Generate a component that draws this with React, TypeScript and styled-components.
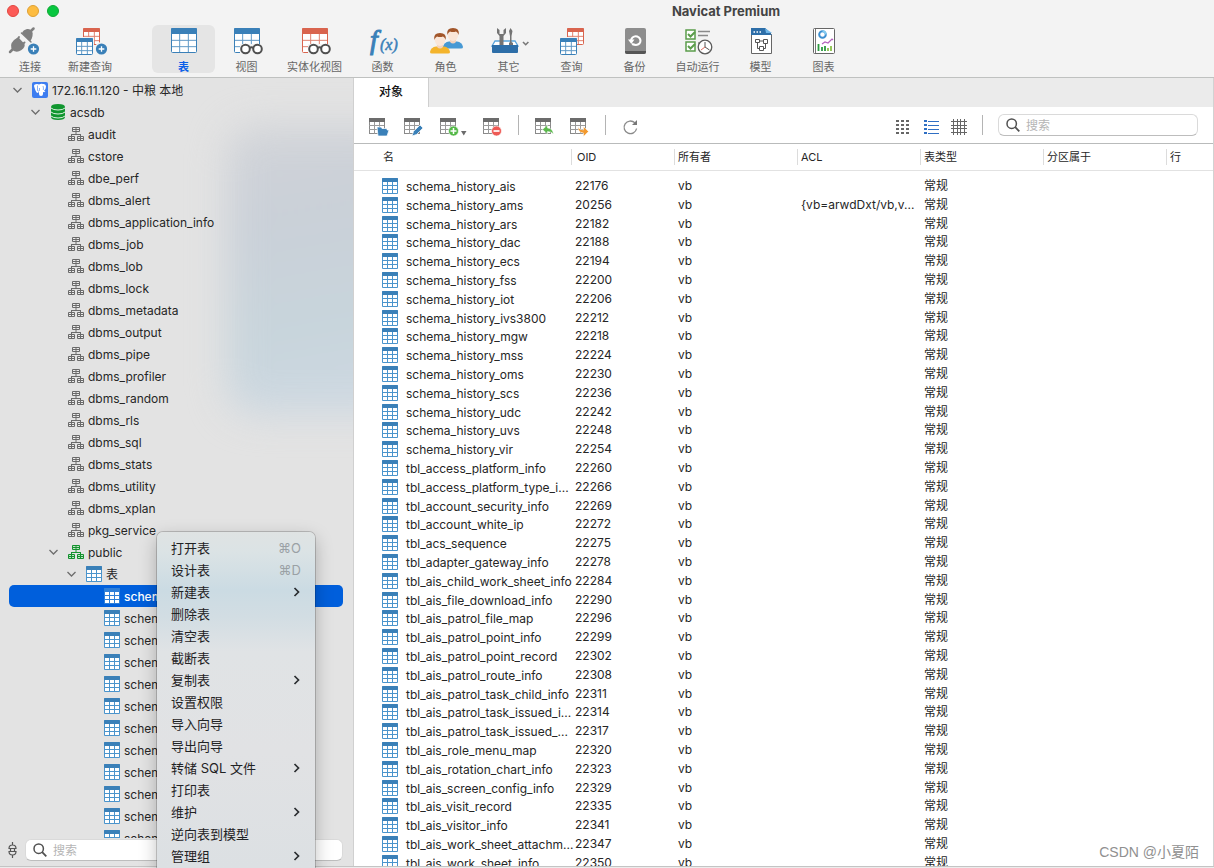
import React from "react";
import styled, { createGlobalStyle, css } from "styled-components";

const GlobalStyle = createGlobalStyle`
  *, *::before, *::after { box-sizing: border-box; }
  html, body { margin: 0; padding: 0; overflow: hidden; }
  body, button, input, table {
    font-family: Inter, "Noto Sans CJK SC", sans-serif;
    font-size: 12px;
    color: #262626;
  }
  button { border: 0; padding: 0; background: none; }
  svg { flex: none; }
`;

/* ---------- window frame ---------- */

const Shell = styled.div`
  position: relative;
  display: flex;
  flex-direction: column;
  height: 100vh;
  overflow: hidden;
  background: #fff;
`;

const WindowHeader = styled.header`
  flex: none;
  background: #f3f3f3;
  border-bottom: 1px solid #bfc1c0;
`;

const TitleBar = styled.div`
  display: flex;
  align-items: center;
  height: 22px;
`;

const Lights = styled.div`
  display: flex;
  gap: 8px;
  width: 238px;
  padding-left: 7px;
`;

const Light = styled.button<{ $color: string; $edge: string }>`
  width: 12px;
  height: 12px;
  border-radius: 50%;
  background: ${(p) => p.$color};
  border: 1px solid ${(p) => p.$edge};
`;

const Title = styled.h1`
  flex: 1;
  margin: 0;
  text-align: center;
  font-size: 13px;
  font-weight: 700;
  line-height: 20px;
  color: #444;
`;

const ToolStrip = styled.nav`
  display: flex;
  height: 55px;
  padding-top: 3px;
`;

const ToolGroup = styled.div`
  display: flex;
  margin-right: 32px;
`;

const Tool = styled.button<{ $width: number; $active?: boolean }>`
  display: flex;
  flex-direction: column;
  align-items: center;
  gap: 5px;
  width: ${(p) => p.$width}px;
  height: 48px;
  padding-top: 2px;
  border-radius: 6px;
  font-size: 11px;
  line-height: 14px;
  white-space: nowrap;
  color: #666;
  ${(p) =>
    p.$active &&
    css`
      background: #e5e5e5;
      color: #0a60e8;
      font-weight: 700;
    `}
`;

const Body = styled.div`
  display: flex;
  flex: 1;
  min-height: 0;
`;

const StatusEdge = styled.footer`
  flex: none;
  height: 2px;
  background: #ececec;
  border-top: 1px solid #c4c4c4;
`;

/* ---------- sidebar ---------- */

const Sidebar = styled.aside`
  position: relative;
  z-index: 0;
  display: flex;
  flex: none;
  flex-direction: column;
  width: 354px;
  overflow: hidden;
  background: #e3e3e3;
  border-right: 1px solid #d0d0d0;
  &::before {
    content: "";
    position: absolute;
    z-index: -1;
    top: 48px;
    right: -60px;
    width: 186px;
    height: 288px;
    border-radius: 30px;
    background: linear-gradient(170deg, #d2d4d8, #cad0d8 30%, #c8d5dc 70%, #cfd9e3);
    filter: blur(18px);
  }
`;

const Tree = styled.ul`
  flex: 1;
  min-height: 0;
  margin: 0;
  padding: 1px 10px 0 9px;
  overflow: hidden;
  list-style: none;
`;

const TreeRow = styled.li<{ $level: number; $selected?: boolean }>`
  display: flex;
  align-items: center;
  height: 22px;
  padding-left: ${(p) => p.$level * 18}px;
  border-radius: 5px;
  line-height: 17px;
  white-space: nowrap;
  color: #262626;
  ${(p) =>
    p.$selected &&
    css`
      background: #005fdc;
      color: #fff;
      font-weight: 500;
    `}
`;

const Twisty = styled.span`
  display: flex;
  justify-content: center;
  width: 16px;
  margin-right: 7px;
`;

const TreeIcon = styled.span`
  display: flex;
  width: 16px;
  margin-right: 4px;
`;

const SideFooter = styled.div`
  display: flex;
  align-items: center;
  gap: 7px;
  height: 28px;
  padding: 0 10px 4px 7px;
`;

const SearchBox = styled.label<{ $wide?: boolean }>`
  display: flex;
  align-items: center;
  gap: 6px;
  height: 22px;
  padding: 0 7px;
  background: #fff;
  border: 1px solid #dadada;
  border-bottom-color: #bdbdbd;
  border-radius: 6px;
  ${(p) => (p.$wide ? "flex: 1;" : "width: 200px;")}
  input {
    flex: 1;
    min-width: 0;
    padding: 0;
    border: 0;
    outline: 0;
    background: none;
  }
  input::placeholder { color: #b5b5b5; }
`;

/* ---------- object panel ---------- */

const Panel = styled.main`
  display: flex;
  flex: 1;
  flex-direction: column;
  min-width: 0;
  overflow: hidden;
  border-right: 1px solid #d2d2d2;
`;

const TabBar = styled.div`
  display: flex;
  flex: none;
  height: 29px;
  background: #ebebeb;
`;

const Tab = styled.button`
  width: 75px;
  padding-bottom: 4px;
  background: #fff;
  border-right: 1px solid #cfcfcf;
  font-weight: 500;
  color: #111;
`;

const ObjectBar = styled.div`
  display: flex;
  flex: none;
  align-items: center;
  height: 37px;
  padding: 0 15px 0 14px;
  border-bottom: 1px solid #b9bbbb;
`;

const IconButton = styled.button<{ $width?: number }>`
  display: flex;
  align-items: center;
  width: ${(p) => p.$width ?? 36}px;
  height: 24px;
  padding-top: 3px;
`;

const Divider = styled.span<{ $after: number }>`
  width: 1px;
  height: 20px;
  margin-right: ${(p) => p.$after}px;
  background: #b4b4b4;
`;

const Spacer = styled.span`
  flex: 1;
`;

const TableArea = styled.div`
  flex: 1;
  min-height: 0;
  overflow: hidden;
`;

const Grid = styled.table`
  width: 100%;
  table-layout: fixed;
  border-collapse: separate;
  border-spacing: 0;
  white-space: nowrap;
  th {
    height: 27px;
    padding: 0;
    border-bottom: 1px solid #e2e2e2;
    font-size: 11px;
    font-weight: 400;
    line-height: 16px;
    text-align: left;
  }
  td {
    height: 19px;
    padding: 0 0 0 3px;
    line-height: 17px;
    vertical-align: top;
  }
`;

/* Rows run four of 19px to one of 18px. */
const GridRow = styled.tr`
  &:nth-child(5n + 3) td { height: 18px; }
`;

const SpacerRow = styled.tr`
  td { height: 6px; line-height: 0; }
`;

const HeadLabel = styled.span<{ $indent: number; $last?: boolean }>`
  display: block;
  height: 16px;
  padding-left: ${(p) => p.$indent}px;
  border-right: ${(p) => (p.$last ? "0" : "1px solid #dcdcdc")};
`;

const NameCell = styled.div`
  display: flex;
  align-items: center;
  gap: 8px;
  height: 18px;
  padding-left: 25px;
`;

/* ---------- overlays ---------- */

const Menu = styled.div`
  position: absolute;
  z-index: 5;
  top: 532px;
  left: 157px;
  width: 158px;
  padding: 5px 0;
  border-radius: 6px 6px 0 0;
  background: linear-gradient(
    to bottom,
    #dfe3e3 0,
    #dbe3e5 20px,
    #cbdbe3 58px,
    #d2dde3 85px,
    #e0e3e5 120px,
    #e1e2e4 220px,
    #dce0e3 335px
  );
  box-shadow: 0 0 0 1px rgba(0, 0, 0, 0.18), 0 6px 18px rgba(0, 0, 0, 0.26);
`;

const MenuItem = styled.button`
  display: flex;
  align-items: center;
  justify-content: space-between;
  width: 100%;
  height: 22px;
  padding: 0 14px;
  font-size: 13px;
  line-height: 22px;
  text-align: left;
  color: #1f2224;
`;

const Shortcut = styled.kbd`
  font-family: Inter, "DejaVu Sans", sans-serif;
  font-size: 13px;
  color: #9aa1a5;
`;

const Watermark = styled.div`
  position: absolute;
  right: 15px;
  bottom: 5px;
  font-family: "Liberation Sans", "Noto Sans CJK SC", sans-serif;
  font-size: 14px;
  line-height: 22px;
  color: #909090;
`;

/* ---------- icons ---------- */

const BLUE = "#3a80b8";
const RED = "#d9644e";

const MiniTable = ({ x, y, w, h, c }: { x: number; y: number; w: number; h: number; c: string }) => {
  const head = Math.round(h * 0.25);
  const rh = (h - head) / 3;
  return (
    <g>
      <rect x={x + 0.5} y={y + 0.5} width={w - 1} height={h - 1} rx="1" fill="#fff" stroke={c} />
      <rect x={x} y={y} width={w} height={head} rx="1" fill={c} />
      <path
        d={`M${x + w / 3} ${y + head}v${h - head} M${x + (2 * w) / 3} ${y + head}v${h - head} M${x} ${y + head + rh}h${w} M${x} ${y + head + 2 * rh}h${w}`}
        stroke={c}
        strokeWidth="1"
        opacity="0.8"
      />
    </g>
  );
};

const PlusBadge = ({ x, y }: { x: number; y: number }) => (
  <g>
    <circle cx={x} cy={y} r="5.6" fill={BLUE} />
    <path d={`M${x - 2.8} ${y}h5.6M${x} ${y - 2.8}v5.6`} stroke="#fff" strokeWidth="1.3" />
  </g>
);

const Glasses = () => (
  <g fill="#fff" stroke="#505050" strokeWidth="2">
    <path d="M13 17h25v11H13z" fill="#f3f3f3" stroke="none" />
    <circle cx="18.500" cy="22" r="4.300" />
    <circle cx="30.500" cy="22" r="4.300" />
    <path d="M22.500 21q2-1.600 4 0" fill="none" />
  </g>
);

const Person = ({ x, y, c }: { x: number; y: number; c: string }) => (
  <g>
    <path d={`M${x - 10} ${y + 20}q1-5 6-5.500h8q5 .5 6 5.500q0 1.500-2 1.500h-16q-2 0-2-1.500z`} fill={c} />
    <path d={`M${x - 3} ${y + 11}h6v4q-3 3-6 0z`} fill="#f3d3bd" />
    <ellipse cx={x} cy={y + 8} rx="5.200" ry="6" fill="#fae6d8" />
    <path d={`M${x - 5.6} ${y + 8}q-1.400-7 5.600-7t5.600 7q-.8-3-2.600-3.500q-3 1-6 0q-2 1-2.600 3.500z`} fill="#a2562a" />
  </g>
);

const toolIcons: Record<string, React.ReactNode> = {
  connect: (
    <>
      <g fill="#7f7f7f" stroke="#7f7f7f" strokeLinecap="round">
        <path d="M0 25l3.500-3.500" strokeWidth="2.500" fill="none" />
        <path d="M4 13q4-3 5-2l5.500 6q1 3-3 6-5 3.500-9 0-3.500-5 1.500-10z" stroke="none" />
        <path d="M6.500 13.500L9 10M11.500 18l3-2.500" strokeWidth="2" fill="none" />
        <path d="M11.500 6l9.500 9" strokeWidth="1.500" />
        <path d="M12 6q1-3 5-4 3-.5 4.500 1.500Q23.500 6 22.500 9q-.5 3-2.500 5.500z" stroke="none" />
        <path d="M21 4l2.500-2.500" strokeWidth="2.500" fill="none" />
      </g>
      <circle cx="23.500" cy="22" r="6.500" fill="#f3f3f3" />
      <PlusBadge x={23.5} y={22} />
    </>
  ),
  newQuery: (
    <>
      <MiniTable x={13} y={1} w={17} h={17} c={RED} />
      <path d="M5 10h19v18H5z" fill="#f3f3f3" />
      <MiniTable x={6} y={11} w={17} h={17} c={BLUE} />
      <circle cx="31.500" cy="22" r="7" fill="#f3f3f3" />
      <PlusBadge x={31.5} y={22} />
    </>
  ),
  table: <MiniTable x={7} y={1} w={26} h={25} c={BLUE} />,
  view: (
    <>
      <MiniTable x={7} y={1} w={26} h={25} c={BLUE} />
      <Glasses />
    </>
  ),
  matView: (
    <>
      <MiniTable x={7} y={1} w={26} h={25} c={RED} />
      <Glasses />
    </>
  ),
  func: (
    <g fill={BLUE} stroke={BLUE} fontFamily="Liberation Serif" fontStyle="italic">
      <text x="7" y="22" fontSize="28" strokeWidth="1">f</text>
      <text x="17" y="23" fontSize="16" strokeWidth="0.5">(x)</text>
    </g>
  ),
  role: (
    <>
      <Person x={27} y={0} c="#4799d4" />
      <Person x={14} y={5} c="#f4b42c" />
    </>
  ),
  other: (
    <>
      <path d="M6 14h20l3 5H3z" fill="#fff" stroke="#5aa5dc" strokeWidth="1.300" />
      <path d="M8 1v5l2.500 3v10h4V9L17 6V1l-2.500 2v4h-4V3z" fill="#737373" />
      <path d="M21.500 1l2 3-1 5v6l1.500 1v3h-4v-3l1-1V9l-1-5z" fill="#737373" />
      <path d="M3 18h26v7q0 1-1 1H4q-1 0-1-1z" fill="#2d6ea8" />
      <path d="M34 15l2.700 2.700 2.700-2.700" fill="none" stroke="#777" strokeWidth="1.600" />
    </>
  ),
  query: (
    <>
      <MiniTable x={15} y={1} w={17} h={17} c={RED} />
      <path d="M7 10h18v18H7z" fill="#f3f3f3" />
      <MiniTable x={8} y={11} w={17} h={17} c={BLUE} />
    </>
  ),
  backup: (
    <>
      <rect x="10" y="1" width="21" height="26" rx="2" fill="#8d8d8d" />
      <path d="M10 24h21v1q0 2-2 2H12q-2 0-2-2z" fill="#555" />
      <path d="M17 17q5 2 7.500-.500q2.200-3-.500-6q-3.500-2.500-6.500 0q-1.500 1.500-1.500 3.500" fill="none" stroke="#fff" strokeWidth="2" />
      <path d="M13 12.500h6.500l-3.200 4.500z" fill="#fff" />
    </>
  ),
  auto: (
    <>
      <g fill="#fff" stroke="#5b9d4b" strokeWidth="1.500">
        <path d="M8 3h9v9H8zM8 15h9v9H8z" />
        <path d="M10 7l2.500 2.500L17 5M10 19l2.500 2.500L17 17" fill="none" strokeWidth="2" />
      </g>
      <path d="M20 4.500h12M20 8.500h10M20 16h3" stroke="#8a8a8a" strokeWidth="1.700" />
      <circle cx="27" cy="20" r="6.800" fill="#fff" stroke="#5b5b5b" strokeWidth="1.300" />
      <path d="M27 15v5l4.500 3" fill="none" stroke="#555" />
      <path d="M27 20l-4 3" stroke="#e06a5a" />
    </>
  ),
  model: (
    <>
      <path d="M10.500 1.500h14l6 6v19h-20z" fill="#fff" stroke="#666" />
      <path d="M10 1h14l7 7H10z" fill="#2d6ea8" />
      <path d="M24 1l7 5h-6z" fill="#6eb5e8" />
      <path d="M12.500 5h1.500M15.500 5h1.500M18.500 5h1.500" stroke="#fff" strokeWidth="1.500" />
      <path d="M14.500 12.500h4v3h-4zM22.500 12.500h4v4h-4zM18.500 19.500h4v4h-4zM18.500 14h4M16.500 15.500v6h2M24.500 16.500v5h-2" fill="none" stroke="#555" />
    </>
  ),
  chart: (
    <>
      <rect x="9.500" y="1.500" width="21" height="25" rx="1" fill="#fff" stroke="#666" />
      <path d="M11.500 2v24" stroke="#777" />
      <circle cx="18.500" cy="7.500" r="3.300" fill="none" stroke="#3d8fd0" strokeWidth="2" />
      <path d="M18.500 4.200a3.300 3.300 0 0 1 3.300 3.300" fill="none" stroke="#82ccf0" strokeWidth="2" />
      <path d="M18 17l3-2 3 1 4-4 1 1" fill="none" stroke="#b462bd" strokeWidth="1.200" />
      <path d="M14.500 17v7M18 20v4M21 19v5" stroke="#2c9a3f" strokeWidth="1.800" />
      <path d="M24 21v3M27 19v5" stroke="#8bc34a" strokeWidth="1.800" />
    </>
  ),
};

const SmallTable = ({ inverse }: { inverse?: boolean }) => (
  <svg width="16" height="16" viewBox="0 0 16 16">
    <rect width="16" height="16" rx="1" fill={inverse ? "#2f7fd8" : "#4a94cc"} />
    <rect width="16" height="4" rx="1" fill={inverse ? "#2f7fd8" : BLUE} />
    <path
      d="M1 4h4v3H1zM6 4h4v3H6zM11 4h4v3h-4zM1 8h4v3H1zM6 8h4v3H6zM11 8h4v3h-4zM1 12h4v3H1zM6 12h4v3H6zM11 12h4v3h-4z"
      fill="#fff"
    />
  </svg>
);

const SchemaIcon = ({ color, fill }: { color: string; fill: string }) => (
  <svg width="16" height="16" viewBox="0 0 16 16" fill={fill} stroke={color}>
    <path d="M4.500 1.500h7v4h-7zM.5 10.500h6v4h-6zM9.500 10.500h6v4h-6z" />
    <path d="M4.500 3.500h7M8 1.500v6.500M.5 12.500h6M3.500 8v6.500M9.500 12.500h6M12.500 8v6.500M3 8.500h10" fill="none" />
  </svg>
);

const DatabaseIcon = () => (
  <svg width="16" height="16" viewBox="0 0 16 16">
    <path d="M1 3q0-3 7-3t7 3v10q0 3-7 3t-7-3z" fill="#10962f" />
    <path d="M1 4q2 2 7 2t7-2M1 8q2 2 7 2t7-2M1 12q2 2 7 2t7-2" fill="none" stroke="#dff0e2" />
  </svg>
);

const PostgresIcon = () => (
  <svg width="16" height="16" viewBox="0 0 16 16">
    <rect width="16" height="16" rx="2" fill="#3d7df0" />
    <path d="M2 4q0-2 3-2 1.500 0 2 .5Q9 1.500 11 2q3-.5 3 2.500 0 2.500-2 4.500l1.500.5q-1 1-2.500.5v2q0 2-2 2t-2-2V9.500l-1 1.500q-1.500 0-2.500-2.500T2 4z" fill="#fff" />
    <path d="M5.500 3.500v5q1 1 2 0V6M11 4q.8 2 .3 4" fill="none" stroke="#3d7df0" strokeWidth="0.600" />
  </svg>
);

const ChevronDown = () => (
  <svg width="10" height="6" viewBox="0 0 10 6">
    <path d="M1.500 1l4 4L9.500 1" fill="none" stroke="#6d6d6d" strokeWidth="1.300" />
  </svg>
);

const ChevronRight = () => (
  <svg width="8" height="12" viewBox="0 0 8 12">
    <path d="M1.500 2l4 4-4 4" fill="none" stroke="#2a2d30" strokeWidth="1.700" />
  </svg>
);

const SearchIcon = () => (
  <svg width="14" height="14" viewBox="0 0 14 14" fill="none" stroke="#505050" strokeWidth="1.500">
    <circle cx="5.700" cy="5.700" r="4.700" />
    <path d="M9.200 9.200L13.300 13.300" strokeWidth="1.800" />
  </svg>
);

const PlugIcon = () => (
  <svg width="11" height="16" viewBox="0 0 11 16" fill="none" stroke="#555" strokeWidth="1.200">
    <path d="M2 6.500q0-3.500 3.500-3.500T9 6.500zM2 9.500q0 3.500 3.500 3.500T9 9.500zM5.500 0v3M5.500 13v3M3.500 6.500v3M7.500 6.500v3" />
  </svg>
);

const ActionIcon = ({ children, width = 22 }: { children?: React.ReactNode; width?: number }) => (
  <svg width={width} height="20" viewBox={`0 0 ${width} 20`}>
    <rect x="1.500" y="1.500" width="15" height="15" fill="#fff" stroke="#8a8a8a" />
    <path d="M6.500 4v13M11.500 4v13M1 8.500h15M1 12.500h15" stroke="#9a9a9a" />
    <path d="M1 1h16v4H1z" fill="#6c6c6c" />
    {children}
  </svg>
);

/* ---------- data ---------- */

type ToolDef = { icon: string; label: string; width?: number; active?: boolean };

const leadTools: ToolDef[] = [
  { icon: "connect", label: "连接", width: 60 },
  { icon: "newQuery", label: "新建查询", width: 60 },
];

const mainTools: ToolDef[] = [
  { icon: "table", label: "表", active: true },
  { icon: "view", label: "视图" },
  { icon: "matView", label: "实体化视图", width: 73 },
  { icon: "func", label: "函数" },
  { icon: "role", label: "角色" },
  { icon: "other", label: "其它" },
  { icon: "query", label: "查询" },
  { icon: "backup", label: "备份" },
  { icon: "auto", label: "自动运行" },
  { icon: "model", label: "模型" },
  { icon: "chart", label: "图表" },
];

const schemas = [
  "audit", "cstore", "dbe_perf", "dbms_alert", "dbms_application_info", "dbms_job", "dbms_lob",
  "dbms_lock", "dbms_metadata", "dbms_output", "dbms_pipe", "dbms_profiler", "dbms_random",
  "dbms_rls", "dbms_sql", "dbms_stats", "dbms_utility", "dbms_xplan", "pkg_service",
];

const treeTables = Array.from({ length: 12 }, () => "schem");

const rows: [string, string][] = [
  ["schema_history_ais", "22176"],
  ["schema_history_ams", "20256"],
  ["schema_history_ars", "22182"],
  ["schema_history_dac", "22188"],
  ["schema_history_ecs", "22194"],
  ["schema_history_fss", "22200"],
  ["schema_history_iot", "22206"],
  ["schema_history_ivs3800", "22212"],
  ["schema_history_mgw", "22218"],
  ["schema_history_mss", "22224"],
  ["schema_history_oms", "22230"],
  ["schema_history_scs", "22236"],
  ["schema_history_udc", "22242"],
  ["schema_history_uvs", "22248"],
  ["schema_history_vir", "22254"],
  ["tbl_access_platform_info", "22260"],
  ["tbl_access_platform_type_i...", "22266"],
  ["tbl_account_security_info", "22269"],
  ["tbl_account_white_ip", "22272"],
  ["tbl_acs_sequence", "22275"],
  ["tbl_adapter_gateway_info", "22278"],
  ["tbl_ais_child_work_sheet_info", "22284"],
  ["tbl_ais_file_download_info", "22290"],
  ["tbl_ais_patrol_file_map", "22296"],
  ["tbl_ais_patrol_point_info", "22299"],
  ["tbl_ais_patrol_point_record", "22302"],
  ["tbl_ais_patrol_route_info", "22308"],
  ["tbl_ais_patrol_task_child_info", "22311"],
  ["tbl_ais_patrol_task_issued_i...", "22314"],
  ["tbl_ais_patrol_task_issued_...", "22317"],
  ["tbl_ais_role_menu_map", "22320"],
  ["tbl_ais_rotation_chart_info", "22323"],
  ["tbl_ais_screen_config_info", "22329"],
  ["tbl_ais_visit_record", "22335"],
  ["tbl_ais_visitor_info", "22341"],
  ["tbl_ais_work_sheet_attachm...", "22347"],
  ["tbl_ais_work_sheet_info", "22350"],
];

const columns = [
  { label: "名", width: 218, indent: 29 },
  { label: "OID", width: 103, indent: 5 },
  { label: "所有者", width: 123, indent: 3 },
  { label: "ACL", width: 123, indent: 3 },
  { label: "表类型", width: 123, indent: 3 },
  { label: "分区属于", width: 123, indent: 3 },
  { label: "行", indent: 3 },
];

const menuItems: { label: string; key?: string; sub?: boolean }[] = [
  { label: "打开表", key: "⌘O" },
  { label: "设计表", key: "⌘D" },
  { label: "新建表", sub: true },
  { label: "删除表" },
  { label: "清空表" },
  { label: "截断表" },
  { label: "复制表", sub: true },
  { label: "设置权限" },
  { label: "导入向导" },
  { label: "导出向导" },
  { label: "转储 SQL 文件", sub: true },
  { label: "打印表" },
  { label: "维护", sub: true },
  { label: "逆向表到模型" },
  { label: "管理组", sub: true },
];

/* ---------- composition ---------- */

const ToolButton = ({ icon, label, width = 63, active }: ToolDef) => (
  <Tool $width={width} $active={active}>
    <svg width="40" height="28" viewBox="0 0 40 28" overflow="visible">
      {toolIcons[icon]}
    </svg>
    {label}
  </Tool>
);

const TreeItem = ({
  level, icon, label, open, selected,
}: { level: number; icon: React.ReactNode; label: string; open?: boolean; selected?: boolean }) => (
  <TreeRow $level={level} $selected={selected}>
    <Twisty>{open && <ChevronDown />}</Twisty>
    <TreeIcon>{icon}</TreeIcon>
    {label}
  </TreeRow>
);

export default function App() {
  return (
    <Shell>
      <GlobalStyle />
      <WindowHeader>
        <TitleBar>
          <Lights>
            <Light aria-label="关闭" $color="#fc5b57" $edge="#e2463f" />
            <Light aria-label="最小化" $color="#fdbc40" $edge="#dfa032" />
            <Light aria-label="缩放" $color="#08c740" $edge="#10a834" />
          </Lights>
          <Title>Navicat Premium</Title>
        </TitleBar>
        <ToolStrip>
          <ToolGroup>
            {leadTools.map((t) => <ToolButton key={t.icon} {...t} />)}
          </ToolGroup>
          {mainTools.map((t) => <ToolButton key={t.icon} {...t} />)}
        </ToolStrip>
      </WindowHeader>

      <Body>
        <Sidebar>
          <Tree>
            <TreeItem level={0} open icon={<PostgresIcon />} label="172.16.11.120 - 中粮 本地" />
            <TreeItem level={1} open icon={<DatabaseIcon />} label="acsdb" />
            {schemas.map((s) => (
              <TreeItem key={s} level={2} icon={<SchemaIcon color="#6a6a6a" fill="#ececec" />} label={s} />
            ))}
            <TreeItem level={2} open icon={<SchemaIcon color="#15912f" fill="#bfe6c6" />} label="public" />
            <TreeItem level={3} open icon={<SmallTable />} label="表" />
            {treeTables.map((name, i) => (
              <TreeItem key={i} level={4} selected={i === 0} icon={<SmallTable inverse={i === 0} />} label={name} />
            ))}
          </Tree>
          <SideFooter>
            <PlugIcon />
            <SearchBox $wide>
              <SearchIcon />
              <input type="text" aria-label="搜索连接" placeholder="搜索" />
            </SearchBox>
          </SideFooter>
        </Sidebar>

        <Panel>
          <TabBar>
            <Tab>对象</Tab>
          </TabBar>
          <ObjectBar>
            <IconButton $width={35} aria-label="打开表">
              <ActionIcon>
                <path d="M9 10h4l1 1.500h5V13h2l-2 6H10z" fill={BLUE} stroke="#fff" strokeWidth="0.700" />
              </ActionIcon>
            </IconButton>
            <IconButton aria-label="设计表">
              <ActionIcon>
                <path d="M9 19l1.500-4.500 6.500-6.500 3 3-6.500 6.500z" fill={BLUE} stroke="#fff" strokeWidth="0.700" />
              </ActionIcon>
            </IconButton>
            <IconButton $width={43} aria-label="新建表">
              <ActionIcon width={28}>
                <circle cx="14.500" cy="14" r="5" fill="#54b848" stroke="#fff" strokeWidth="0.600" />
                <path d="M11.500 14h6M14.500 11v6" stroke="#fff" strokeWidth="1.500" />
                <path d="M22 14h5.500l-2.750 4.500z" fill="#6b6b6b" />
              </ActionIcon>
            </IconButton>
            <IconButton aria-label="删除表">
              <ActionIcon>
                <circle cx="14.500" cy="14" r="5" fill="#ee5a55" stroke="#fff" strokeWidth="0.600" />
                <path d="M11.500 14h6" stroke="#fff" strokeWidth="1.700" />
              </ActionIcon>
            </IconButton>
            <Divider $after={15} />
            <IconButton $width={35} aria-label="导入向导">
              <ActionIcon>
                <path d="M8.500 12.500l5-4.500v3q5 0 6 6-2-2.500-6-2.500V17z" fill="#5bb84c" stroke="#fff" strokeWidth="0.500" />
              </ActionIcon>
            </IconButton>
            <IconButton aria-label="导出向导">
              <ActionIcon>
                <path d="M9 9.500q1 3.500 5.500 3.500V9.500l5 5-5 5V16Q9 16 9 9.500z" fill="#f29a30" stroke="#fff" strokeWidth="0.500" />
              </ActionIcon>
            </IconButton>
            <Divider $after={16} />
            <IconButton aria-label="刷新">
              <svg width="17" height="18" viewBox="0 0 17 18">
                <path d="M14.600 10.500a6.300 6.300 0 1 1-1.800-5.700" fill="none" stroke="#8a8a8a" strokeWidth="1.300" />
                <path d="M15 2v5h-5z" fill="#777" />
              </svg>
            </IconButton>
            <Spacer />
            <IconButton $width={28} aria-label="图标">
              <svg width="14" height="16" viewBox="0 0 14 16">
                <path d="M1 2h13M1 6h13M1 10h13M1 14h13" stroke="#666" strokeWidth="2" strokeDasharray="3 2" />
              </svg>
            </IconButton>
            <IconButton $width={28} aria-label="列表">
              <svg width="16" height="16" viewBox="0 0 16 16">
                <path d="M1 2h3M1 6h3M1 10h3M1 14h3" stroke="#2f6fc4" strokeWidth="2" />
                <path d="M5 2.500h11M5 6.500h11M5 10.500h11M5 14.500h11" stroke="#2f6fc4" />
              </svg>
            </IconButton>
            <IconButton $width={31} aria-label="详细">
              <svg width="16" height="16" viewBox="0 0 16 16">
                <path d="M2.500 0v16M6.500 0v16M9.500 0v16M13.500 0v16M0 2.500h16M0 6.500h16M0 9.500h16M0 13.500h16" stroke="#666" />
              </svg>
            </IconButton>
            <Divider $after={15} />
            <SearchBox>
              <SearchIcon />
              <input type="text" aria-label="搜索对象" placeholder="搜索" />
            </SearchBox>
          </ObjectBar>
          <TableArea>
            <Grid>
              <colgroup>
                {columns.map((c) => <col key={c.label} width={c.width} />)}
              </colgroup>
              <thead>
                <tr>
                  {columns.map((c, i) => (
                    <th key={c.label} scope="col">
                      <HeadLabel $indent={c.indent} $last={i === columns.length - 1}>{c.label}</HeadLabel>
                    </th>
                  ))}
                </tr>
                <SpacerRow><td colSpan={7} /></SpacerRow>
              </thead>
              <tbody>
                {rows.map(([name, oid], i) => (
                  <GridRow key={name}>
                    <td><NameCell><SmallTable />{name}</NameCell></td>
                    <td>{oid}</td>
                    <td>vb</td>
                    <td>{i === 1 ? "{vb=arwdDxt/vb,v..." : ""}</td>
                    <td>常规</td>
                    <td />
                    <td />
                  </GridRow>
                ))}
              </tbody>
            </Grid>
          </TableArea>
        </Panel>
      </Body>
      <StatusEdge />

      <Menu role="menu">
        {menuItems.map((m) => (
          <MenuItem key={m.label} role="menuitem">
            {m.label}
            {m.key && <Shortcut>{m.key}</Shortcut>}
            {m.sub && <ChevronRight />}
          </MenuItem>
        ))}
      </Menu>
      <Watermark>CSDN @小夏陌</Watermark>
    </Shell>
  );
}
